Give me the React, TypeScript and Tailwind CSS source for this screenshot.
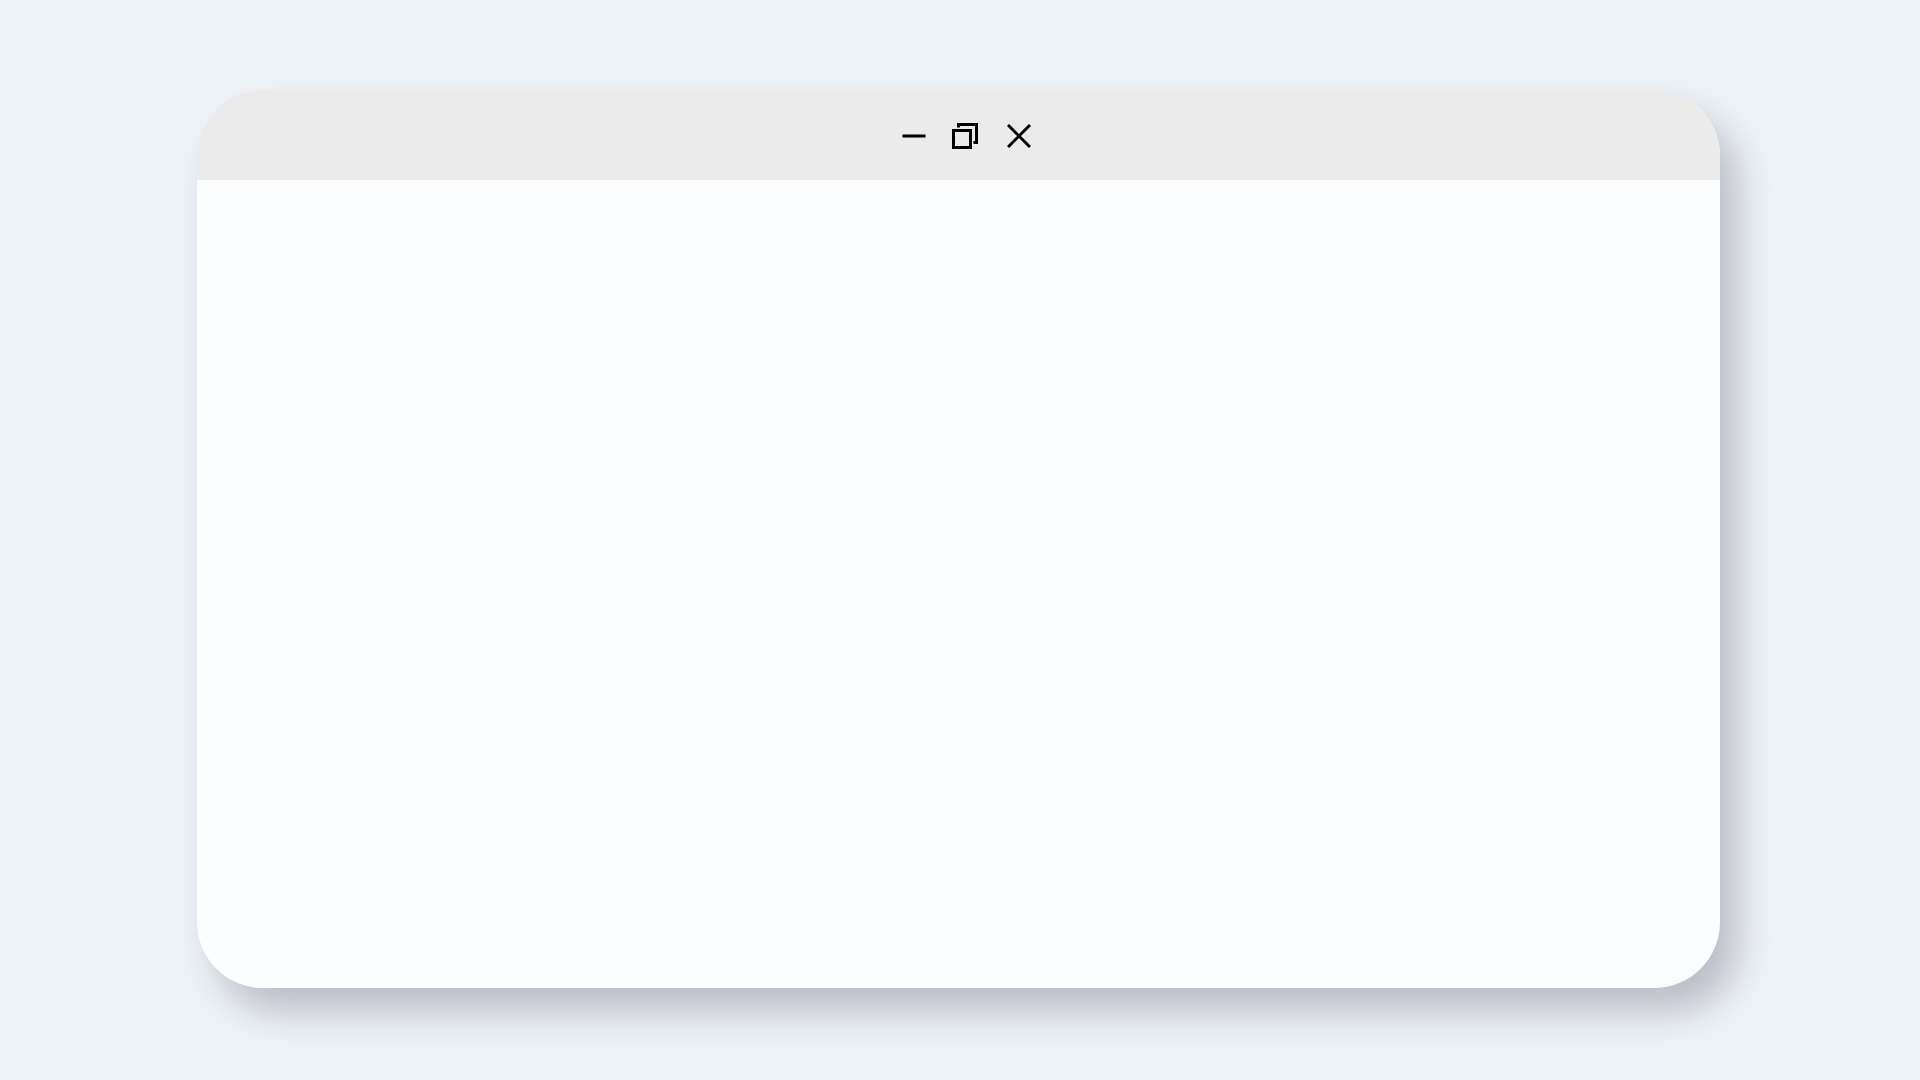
import React from 'react';

const MinimizeIcon = () => (
  <svg width="24" height="24" viewBox="0 0 24 24" className="block">
    <line x1="0.5" y1="12" x2="23.5" y2="12" stroke="#000" strokeWidth="3" />
  </svg>
);

const RestoreIcon = () => (
  <svg width="26" height="26" viewBox="0 0 26 26" className="block">
    {/* back window */}
    <path d="M6.5 4.5 V1.5 H24.5 V19.5 H21.5" fill="none" stroke="#000" strokeWidth="3" />
    {/* front window */}
    <rect x="1.5" y="7.5" width="17" height="17" fill="none" stroke="#000" strokeWidth="3" />
  </svg>
);

const CloseIcon = () => (
  <svg width="24" height="24" viewBox="0 0 24 24" className="block">
    <path d="M1 1 L23 23 M23 1 L1 23" fill="none" stroke="#000" strokeWidth="3" />
  </svg>
);

export default function App() {
  return (
    <div className="w-[1920px] h-[1080px] bg-[#eef3f8] overflow-hidden pt-[90px] pl-[197px]">
      <div className="w-[1523px] h-[898px] rounded-[66px] bg-[#fcfdfe] overflow-hidden flex flex-col shadow-[18px_24px_36px_rgba(140,140,150,0.5)]">
        <div className="h-[90px] bg-[#ebebeb] flex items-center justify-center pl-[15px] pt-[2px]">
          <div className="flex items-center">
            <MinimizeIcon />
            <div className="ml-[26px]">
              <RestoreIcon />
            </div>
            <div className="ml-[29px]">
              <CloseIcon />
            </div>
          </div>
        </div>
        <div className="flex-1" />
      </div>
    </div>
  );
}
